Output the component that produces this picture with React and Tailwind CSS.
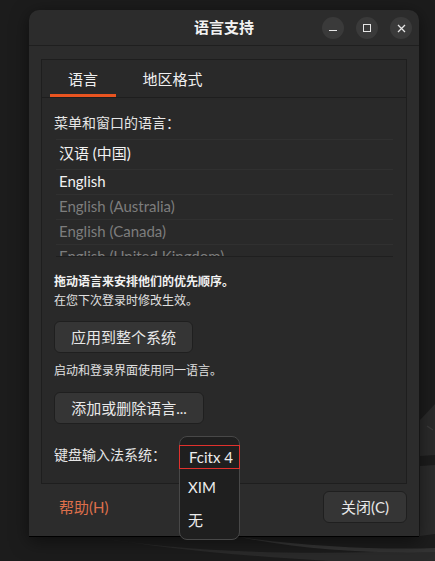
import React from "react";

const font = "font-['Lato','Noto_Sans_CJK_SC',sans-serif]";

function Wallpaper() {
  // 桌面背景的弧线
  return (
    <svg className="absolute inset-0" width="435" height="561" viewBox="0 0 435 561">
      <rect width="435" height="561" fill="#1c1c1c" />
      <path d="M420 420 L435 404 L435 455 L420 456 Z" fill="#2a2a2a" />
      <path d="M427 426 L433 430" stroke="#3a3a3a" strokeWidth="1.5" />
      <path d="M420 466 L435 465 L435 534 L420 536 Z" fill="#2b2b2b" />
      <path d="M95 537 C180 552 300 556 435 550 L435 561 L330 561 C240 556 160 548 95 537 Z" fill="#2a2a2a" />
      <path d="M240 537 C300 546 380 550 435 548 L435 552 C380 554 300 550 240 537 Z" fill="#333333" />
    </svg>
  );
}

function Btn({ children, className = "" }) {
  return (
    <div
      className={`flex h-[32px] items-center justify-center rounded-[6px] border border-[#1f1f1f] bg-[#353535] text-[15px] text-[#e8e8e8] ${className}`}
    >
      {children}
    </div>
  );
}

export default function App() {
  const langs = [
    { name: "汉语 (中国)", on: true, h: "h-[30px]" },
    { name: "English", on: true, h: "h-[25px]" },
    { name: "English (Australia)", on: false, h: "h-[25px]" },
    { name: "English (Canada)", on: false, h: "h-[25px]" },
    { name: "English (United Kingdom)", on: false, h: "h-[25px]" },
  ];

  return (
    <div className={`relative h-[561px] w-[435px] overflow-hidden ${font}`}>
      <Wallpaper />

      {/* 窗口 */}
      <div className="absolute left-[29px] top-[10px] flex h-[527px] w-[390px] flex-col rounded-t-[10px] border-b border-black bg-[#2c2c2c] shadow-[0_4px_18px_rgba(0,0,0,0.5)]">
        <div className="relative flex h-[36px] shrink-0 items-center justify-center border-b border-[#1f1f1f]">
          <span className="text-[15px] font-bold text-[#f2f2f2]">语言支持</span>
          <div className="absolute right-[7px] top-[7px] flex gap-[12px]">
            <div className="flex h-[22px] w-[22px] items-center justify-center rounded-full bg-[#3a3a3a]">
              <div className="mt-[5px] h-[1.5px] w-[8px] bg-[#e6e6e6]" />
            </div>
            <div className="flex h-[22px] w-[22px] items-center justify-center rounded-full bg-[#3a3a3a]">
              <div className="h-[8px] w-[8px] border border-[#e6e6e6]" />
            </div>
            <div className="flex h-[22px] w-[22px] items-center justify-center rounded-full bg-[#3a3a3a]">
              <svg width="9" height="9" viewBox="0 0 9 9">
                <path d="M1 1L8 8M8 1L1 8" stroke="#e6e6e6" strokeWidth="1.3" />
              </svg>
            </div>
          </div>
        </div>

        {/* 标签页框 */}
        <div className="mx-[12px] mt-[13px] flex h-[425px] flex-col border border-[#1e1e1e] bg-[#292929]">
          <div className="flex h-[38px] shrink-0 border-b border-[#1e1e1e] pl-[8px] text-[15px]">
            <div className="flex w-[66px] flex-col items-center justify-end">
              <span className="mb-[4px] text-[#f0f0f0]">语言</span>
              <div className="h-[3px] w-full bg-[#e95420]" />
            </div>
            <div className="flex w-[113px] items-end justify-center">
              <span className="mb-[7px] text-[#f0f0f0]">地区格式</span>
            </div>
          </div>

          <div className="flex flex-col px-[12px]">
            <div className="mt-[15px] text-[14px] leading-[20px] text-[#e6e6e6]">菜单和窗口的语言：</div>

            <div className="ml-[2px] mr-[1px] mt-[6px] h-[118px] overflow-hidden border-b border-[#1f1f1f]">
              {langs.map((l) => (
                <div
                  key={l.name}
                  className={`flex ${l.h} items-center border-t border-[#303030] pb-[2px] pl-[3px] text-[15px] ${
                    l.on ? "text-[#f2f2f2]" : "text-[#7d7d7d]"
                  }`}
                >
                  {l.name}
                </div>
              ))}
            </div>

            <div className="mt-[15px] text-[12px] font-bold leading-[19px] text-[#f2f2f2]">拖动语言来安排他们的优先顺序。</div>
            <div className="text-[12px] leading-[19px] text-[#e0e0e0]">在您下次登录时修改生效。</div>

            <Btn className="mt-[11px] w-[139px]">应用到整个系统</Btn>

            <div className="mt-[9px] text-[12px] leading-[18px] text-[#e0e0e0]">启动和登录界面使用同一语言。</div>

            <Btn className="mt-[12px] w-[150px]">添加或删除语言...</Btn>

            <div className="mt-[21px] text-[14px] leading-[20px] text-[#e6e6e6]">键盘输入法系统：</div>
          </div>
        </div>

        {/* 底部按钮 */}
        <div className="mt-[7px] flex items-center justify-between pl-[30px] pr-[12px]">
          <span className="text-[15px] text-[#de6f4b]">帮助(H)</span>
          <Btn className="w-[84px]">关闭(C)</Btn>
        </div>

        {/* 下拉菜单 */}
        <div className="absolute left-[150px] top-[426px] flex h-[104px] w-[61px] flex-col rounded-[8px] border border-[#484848] bg-[#1f1f1f] pt-[8px] text-[15px] text-[#ececec]">
          <div className="-mx-[1px] flex h-[24px] items-center border border-[#e0312d] pl-[9px]">Fcitx 4</div>
          <div className="flex h-[36px] items-center pl-[8px]">XIM</div>
          <div className="flex h-[30px] items-center pl-[8px]">无</div>
        </div>
      </div>
    </div>
  );
}
